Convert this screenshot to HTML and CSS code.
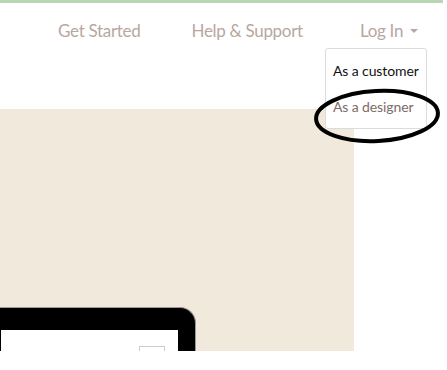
FILE: index.html
```html
<!DOCTYPE html>
<html lang="en">
<head>
    <meta charset="UTF-8">
    <meta name="viewport" content="width=device-width, initial-scale=1.0">
    <title>Log In</title>
    <link rel="stylesheet" href="styles.css">
</head>
<body>
    <div class="page">
        <header class="topbar">
            <nav class="nav">
                <a href="#" class="nav-link">Get Started</a>
                <a href="#" class="nav-link">Help &amp; Support</a>
                <div class="login">
                    <a href="#" class="nav-link">Log In <span class="caret"></span></a>
                    <ul class="dropdown">
                        <li><a href="#" class="item">As a customer</a></li>
                        <li><a href="#" class="item active">As a designer</a></li>
                    </ul>
                    <svg class="circle-mark" width="132" height="60" viewBox="0 0 132 60">
                        <ellipse cx="65" cy="30" rx="61" ry="25" fill="none" stroke="#000" stroke-width="4" transform="rotate(-3 65 30)"/>
                    </svg>
                </div>
            </nav>
        </header>
        <section class="hero">
            <div class="monitor">
                <div class="screen">
                    <div class="screen-box"></div>
                </div>
            </div>
        </section>
    </div>
</body>
</html>
```

FILE: styles.css
```css
body {
    margin: 0;
    font-family: Lato, "Open Sans", sans-serif;
    background: #fff;
}
.page {
    width: 443px;
    border-top: 3px solid #b9d8b1;
}
.topbar {
    height: 106px;
}
.nav {
    display: flex;
    align-items: center;
    padding: 17px 0 0 58px;
    gap: 51px;
    white-space: nowrap;
}
.nav-link {
    color: #b8a79f;
    text-decoration: none;
    font-size: 17px;
    letter-spacing: -0.3px;
}
.login {
    position: relative;
    margin-left: 6px;
}
.caret {
    display: inline-block;
    width: 0;
    height: 0;
    margin-left: 3px;
    vertical-align: 4px;
    border-left: 4px solid transparent;
    border-right: 4px solid transparent;
    border-top: 4px solid #b8a79f;
}
.dropdown {
    position: absolute;
    top: 28px;
    left: -35px;
    width: 100px;
    height: 70px;
    margin: 0;
    padding: 9px 0 0;
    list-style: none;
    background: #fff;
    border: 1px solid #dcdcdc;
    border-radius: 3px;
    z-index: 2;
}
.item {
    display: block;
    padding: 4px 6px 15px 7px;
    font-size: 14px;
    letter-spacing: -0.1px;
    color: #111;
    text-decoration: none;
}
.item.active {
    color: #7d6b66;
}
.circle-mark {
    position: absolute;
    top: 66px;
    left: -48px;
    z-index: 3;
}
.hero {
    width: 354px;
    height: 242px;
    background: #f1e9dc;
    overflow: hidden;
    display: flex;
    flex-direction: column;
    justify-content: flex-end;
}
.monitor {
    width: 206px;
    height: 60px;
    margin-left: -10px;
    margin-bottom: -16px;
    background: #000;
    border: 1px solid #9a9a9a;
    border-bottom: none;
    border-radius: 0 16px 0 0;
    padding: 22px 17px 0 10px;
    box-sizing: border-box;
    flex-shrink: 0;
}
.screen {
    background: #fff;
    height: 60px;
    position: relative;
}
.screen-box {
    position: absolute;
    left: 138px;
    top: 16px;
    width: 24px;
    height: 30px;
    border: 1px solid #d4c9cb;
}
```
